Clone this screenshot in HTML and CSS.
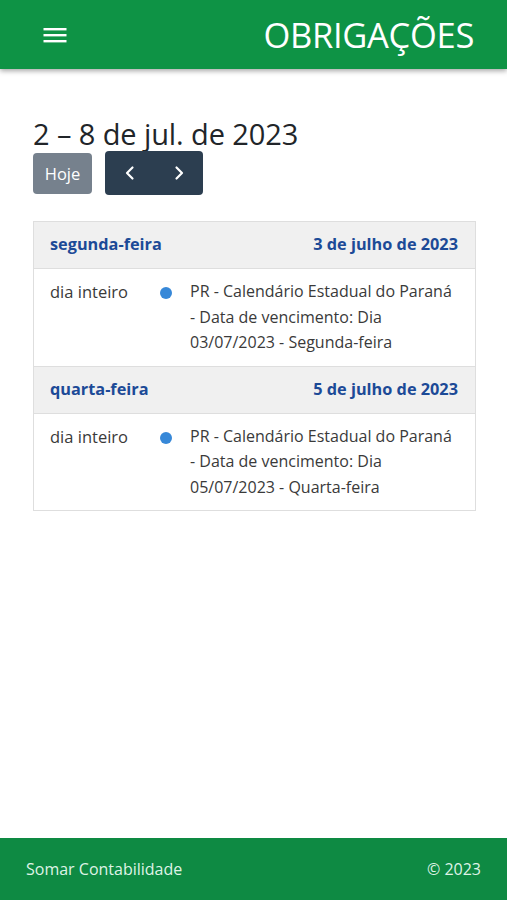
FILE: index.html
```html
<!DOCTYPE html>
<html lang="pt-BR">
<head>
<meta charset="utf-8">
<title>Obrigações</title>
<link rel="stylesheet" href="styles.css">
</head>
<body>
<div class="app">
  <header class="topbar">
    <button class="menu-btn" aria-label="Menu">
      <svg width="24" height="16" viewBox="0 0 24 16"><rect x="0.5" y="1" width="23" height="2.4" fill="#fff"/><rect x="0.5" y="7" width="23" height="2.4" fill="#fff"/><rect x="0.5" y="13" width="23" height="2.4" fill="#fff"/></svg>
    </button>
    <h1 class="page-title">OBRIGAÇÕES</h1>
  </header>

  <main class="content">
    <h2 class="cal-title">2 – 8 de jul. de 2023</h2>
    <div class="toolbar">
      <button class="btn btn-today" disabled>Hoje</button>
      <div class="btn-group">
        <button class="btn btn-nav" aria-label="Anterior">
          <svg width="14" height="16" viewBox="0 0 14 16"><path d="M9.5 2.5 L4 8 L9.5 13.5" fill="none" stroke="#fff" stroke-width="2.2" stroke-linecap="round" stroke-linejoin="round"/></svg>
        </button>
        <button class="btn btn-nav" aria-label="Próximo">
          <svg width="14" height="16" viewBox="0 0 14 16"><path d="M4.5 2.5 L10 8 L4.5 13.5" fill="none" stroke="#fff" stroke-width="2.2" stroke-linecap="round" stroke-linejoin="round"/></svg>
        </button>
      </div>
    </div>

    <div class="list">
      <div class="day-head">
        <span>segunda-feira</span>
        <span>3 de julho de 2023</span>
      </div>
      <div class="event">
        <div class="ev-time">dia inteiro</div>
        <div class="ev-dot"><span></span></div>
        <div class="ev-title">PR - Calendário Estadual do Paraná - Data de vencimento: Dia 03/07/2023 - Segunda-feira</div>
      </div>
      <div class="day-head">
        <span>quarta-feira</span>
        <span>5 de julho de 2023</span>
      </div>
      <div class="event">
        <div class="ev-time">dia inteiro</div>
        <div class="ev-dot"><span></span></div>
        <div class="ev-title">PR - Calendário Estadual do Paraná - Data de vencimento: Dia 05/07/2023 - Quarta-feira</div>
      </div>
    </div>
  </main>

  <footer class="footer">
    <span>Somar Contabilidade</span>
    <span>© 2023</span>
  </footer>
</div>
</body>
</html>
```

FILE: styles.css
```css
* { box-sizing: border-box; }
html, body { margin: 0; padding: 0; }
body {
  font-family: "Open Sans", "Noto Sans", sans-serif;
  color: #212529;
  background: #fff;
}
.app {
  min-height: 900px;
  display: flex;
  flex-direction: column;
}
.topbar {
  height: 69px;
  background: #0e9345;
  display: flex;
  align-items: center;
  justify-content: space-between;
  padding: 0 33px 0 43px;
  box-shadow: 0 2px 5px rgba(0,0,0,0.35);
  position: relative;
  z-index: 1;
}
.menu-btn {
  background: none;
  border: 0;
  padding: 0;
  display: flex;
  cursor: pointer;
}
.page-title {
  margin: 0;
  color: #fff;
  font-weight: 400;
  font-size: 34.5px;
  letter-spacing: -0.3px;
}
.content {
  flex: 1;
  padding: 47px 31px 0 33px;
}
.cal-title {
  margin: 0;
  font-size: 29px;
  font-weight: 400;
  line-height: 36px;
  letter-spacing: -0.1px;
}
.toolbar {
  display: flex;
  align-items: center;
  gap: 13px;
  margin-top: -1px;
}
.btn {
  font-family: inherit;
  border: 0;
  color: #fff;
  border-radius: 4px;
  font-size: 16.5px;
}
.btn-today {
  background: #76818d;
  width: 59px;
  height: 41px;
  padding: 0;
}
.btn-group {
  display: flex;
  background: #2c3e50;
  border-radius: 4px;
  height: 44px;
  width: 98px;
}
.btn-nav {
  background: transparent;
  flex: 1;
  display: flex;
  align-items: center;
  justify-content: center;
  padding: 0;
}
.list {
  margin-top: 26px;
  border: 1px solid #dedede;
  font-size: 16px;
}
.day-head {
  display: flex;
  justify-content: space-between;
  background: #f0f0f0;
  color: #1c4a97;
  font-weight: 700;
  font-size: 16.3px;
  line-height: 25px;
  padding: 10px 17px 11px 16px;
  border-bottom: 1px solid #dedede;
}
.event {
  display: grid;
  grid-template-columns: 110px 30px 1fr;
  line-height: 25.5px;
  color: #3a3a3a;
  padding: 10px 17px 10px 16px;
  border-bottom: 1px solid #dedede;
}
.event:last-child { border-bottom: 0; }
.ev-time { font-size: 16.5px; }
.ev-dot {
  display: flex;
  align-items: flex-start;
  padding-top: 8px;
}
.ev-dot span {
  width: 12px;
  height: 12px;
  border-radius: 50%;
  background: #3788d8;
}
.ev-title { padding-right: 2px; }
.footer {
  height: 62px;
  background: #0e8a43;
  color: #dff3e6;
  display: flex;
  align-items: center;
  justify-content: space-between;
  padding: 0 26px;
  font-size: 16px;
}
```
